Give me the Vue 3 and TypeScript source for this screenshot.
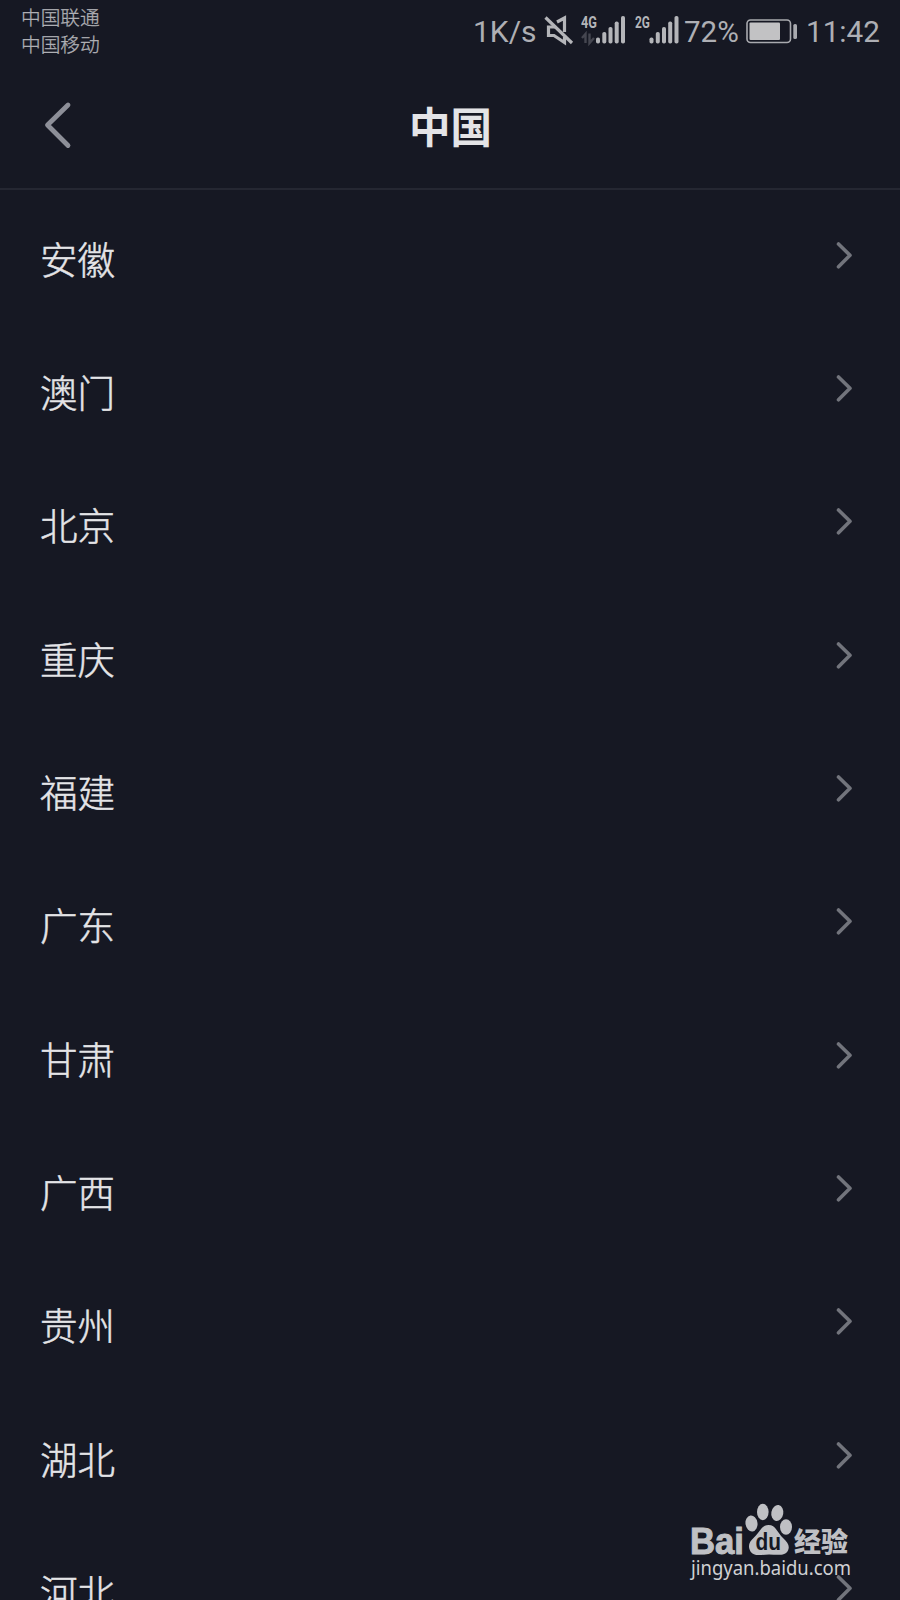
<script setup lang="ts">
interface Bar { x: number; y: number }

const carriers: string[] = ['中国联通', '中国移动']
const regions: string[] = ['安徽', '澳门', '北京', '重庆', '福建', '广东', '甘肃', '广西', '贵州', '湖北', '河北']
const bars: Bar[] = [
  { x: 15, y: 37.5 },
  { x: 21.3, y: 32 },
  { x: 27.5, y: 27 },
  { x: 33.7, y: 21.5 },
  { x: 40, y: 16 },
]
</script>

<template>
  <main class="screen">
    <header class="status">
      <div class="carriers">
        <span v-for="c in carriers" :key="c">{{ c }}</span>
      </div>
      <div class="indicators">
        <span class="speed">1K/s</span>
        <svg class="mute" width="30" height="60" viewBox="0 0 30 60" fill="none" stroke="#b4b5b9" stroke-width="3.2">
          <path d="M11 27H4.500V35.500H10L20.500 42.500V37M13 22L20.500 18V32" />
          <path d="M1.500 17.500L28 43" />
        </svg>
        <svg class="signal" width="45" height="60" viewBox="0 0 45 60">
          <text class="net" x="0" y="28" textLength="16" lengthAdjust="spacingAndGlyphs">4G</text>
          <path d="M1 38L4.500 34V43M8.500 33.500V43L13 38" fill="none" stroke="#454650" stroke-width="2.4" />
          <rect v-for="b in bars" :key="b.x" :x="b.x" :y="b.y" width="4" :height="43.5 - b.y" rx="1.8" fill="#b4b5b9" />
        </svg>
        <svg class="signal second" width="45" height="60" viewBox="0 0 45 60">
          <text class="net" x="0" y="28" textLength="15" lengthAdjust="spacingAndGlyphs">2G</text>
          <rect v-for="b in bars" :key="b.x" :x="b.x - 0.5" :y="b.y" width="4" :height="43.5 - b.y" rx="1.8" fill="#b4b5b9" />
        </svg>
        <span class="percent">72%</span>
        <svg class="battery" width="52" height="60" viewBox="0 0 52 60">
          <rect x="1" y="20" width="43.5" height="22.5" rx="3.5" fill="none" stroke="#a9aaaf" stroke-width="1.6" />
          <rect x="3.5" y="22.5" width="30.5" height="17.5" rx="1" fill="#c2c2c4" />
          <rect x="47.3" y="24" width="3.7" height="15" rx="1.6" fill="#a9aaaf" />
        </svg>
        <span class="clock">11:42</span>
      </div>
    </header>

    <nav class="titlebar">
      <svg class="back" width="30" height="50" viewBox="0 0 30 50" fill="none" stroke="#8d8f98" stroke-width="4.8" stroke-linecap="round" stroke-linejoin="round">
        <path d="M24 4L3.5 24L24 44.500" />
      </svg>
      <h1>中国</h1>
    </nav>

    <ul class="list">
      <li v-for="r in regions" :key="r">
        <span class="name">{{ r }}</span>
        <svg width="20" height="30" viewBox="0 0 20 30" fill="none" stroke="#72747c" stroke-width="3.6" stroke-linecap="round" stroke-linejoin="round">
          <path d="M4.500 2L16 13.300L4.500 24.800" />
        </svg>
      </li>
    </ul>

    <svg class="watermark" width="170" height="84" viewBox="0 0 170 84" fill="#bfc0c4">
      <text class="bai" x="0" y="53.5" textLength="54" lengthAdjust="spacingAndGlyphs">Bai</text>
      <ellipse cx="61.5" cy="23.5" rx="6" ry="8" transform="rotate(-8 61.5 23.5)" />
      <ellipse cx="72.8" cy="12" rx="5.8" ry="8.2" />
      <ellipse cx="87.3" cy="13" rx="6" ry="8" transform="rotate(10 87.3 13)" />
      <ellipse cx="96" cy="27" rx="6" ry="7.8" />
      <path d="M78.5 25C86 25 87.500 33 93 38C98 42.500 100 46 98 50.500C95 56.500 87 54.500 79 54.500C71 54.500 64 57 60.500 51.500C57.500 46 59 42 64 37.500C69.500 33 71.500 25 78.500 25Z" />
      <text class="du" x="65.500" y="50" textLength="25.500" lengthAdjust="spacingAndGlyphs">du</text>
      <text class="jingyan" x="104" y="52" textLength="54" lengthAdjust="spacingAndGlyphs">经验</text>
      <text class="site" x="1" y="75" textLength="160" lengthAdjust="spacingAndGlyphs">jingyan.baidu.com</text>
    </svg>
  </main>
</template>

<style>
body { background: #161823; }
</style>

<style scoped>
.screen {
  position: relative;
  width: 900px;
  height: 1600px;
  overflow: hidden;
  background: #161823;
  color: #e4e4e7;
  font-family: Roboto, "Noto Sans CJK SC", sans-serif;
}
.status {
  display: flex;
  justify-content: space-between;
  height: 64px;
  color: #aeafb4;
}
.carriers {
  display: flex;
  flex-direction: column;
  padding: 3px 0 0 21px;
  font: 300 19.7px/27.3px "Noto Sans CJK SC", sans-serif;
  -webkit-text-stroke: 0.3px #aeafb4;
}
.indicators {
  display: flex;
  width: 428px;
  line-height: 63px;
  font-size: 30px;
  white-space: nowrap;
}
.speed { width: 71px; padding-left: 1px; }
.mute { margin-right: 7px; }
.signal { margin-right: 9px; }
.signal.second { margin-right: 4px; }
.net { font: bold 16px Roboto, sans-serif; fill: #b4b5b9; }
.percent { width: 62px; font-size: 29.5px; line-height: 64px; }
.battery { margin-right: 8px; }
.clock { font-size: 29.7px; }
.titlebar {
  display: grid;
  grid-template-columns: 100px 1fr 100px;
  align-items: center;
  box-sizing: border-box;
  height: 126px;
  border-bottom: 2px solid #252732;
}
.back { margin-left: 44px; }
h1 {
  margin: 0 0 3px 1px;
  text-align: center;
  font: bold 41.5px/60px "Noto Sans CJK SC", sans-serif;
}
.list {
  margin: 0;
  padding: 0;
  list-style: none;
}
.list li {
  display: flex;
  align-items: center;
  justify-content: space-between;
  height: 133.33px;
  padding: 0 46px 0 40px;
}
.name {
  padding-top: 2px;
  font: 300 37.5px/54px "Noto Sans CJK SC", sans-serif;
  -webkit-text-stroke: 0.5px #e4e4e7;
}
.watermark {
  position: absolute;
  left: 690px;
  top: 1500px;
  overflow: visible;
}
.bai { font: bold 37px "Liberation Sans", sans-serif; stroke: #bfc0c4; stroke-width: 1px; }
.du { font: bold 23px "Liberation Sans", sans-serif; fill: #161823; }
.jingyan { font: 900 27px "Noto Sans CJK SC", sans-serif; }
.site { font: 20px "Noto Sans", sans-serif; fill: #d0d1d4; }
</style>
